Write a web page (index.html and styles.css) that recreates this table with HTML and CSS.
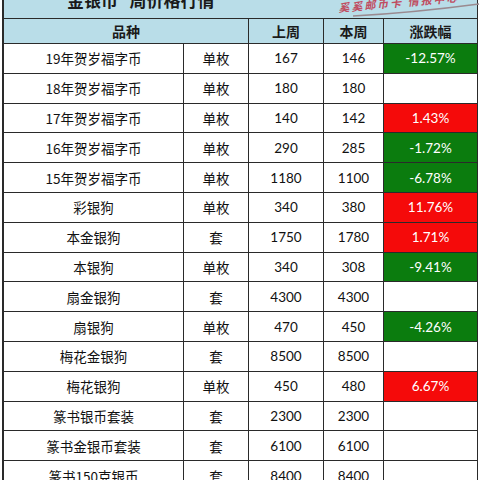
FILE: index.html
```html
<!DOCTYPE html>
<html lang="zh">
<head>
<meta charset="utf-8">
<title>金银币 周价格行情</title>
<link rel="stylesheet" href="styles.css">
</head>
<body>
<div class="sheet">
  <div class="title">金银币&nbsp;&nbsp;&nbsp;周价格行情</div>
  <div class="stamp">
    <span class="stamp-text">奚奚邮币卡 情报中心</span>
    <svg class="swoosh" width="130" height="14" viewBox="0 0 130 14"><path d="M2 13 Q60 10 128 1" fill="none" stroke="#9a8a90" stroke-width="1.6"/></svg>
  </div>
  <div class="hd span2">品种</div>
  <div class="hd">上周</div>
  <div class="hd">本周</div>
  <div class="hd">涨跌幅</div>

  <div class="c name">19年贺岁福字币</div><div class="c unit">单枚</div><div class="c num">167</div><div class="c num">146</div><div class="c num down">-12.57%</div>
  <div class="c name">18年贺岁福字币</div><div class="c unit">单枚</div><div class="c num">180</div><div class="c num">180</div><div class="c num"></div>
  <div class="c name">17年贺岁福字币</div><div class="c unit">单枚</div><div class="c num">140</div><div class="c num">142</div><div class="c num up">1.43%</div>
  <div class="c name">16年贺岁福字币</div><div class="c unit">单枚</div><div class="c num">290</div><div class="c num">285</div><div class="c num down">-1.72%</div>
  <div class="c name">15年贺岁福字币</div><div class="c unit">单枚</div><div class="c num">1180</div><div class="c num">1100</div><div class="c num down">-6.78%</div>
  <div class="c name">彩银狗</div><div class="c unit">单枚</div><div class="c num">340</div><div class="c num">380</div><div class="c num up">11.76%</div>
  <div class="c name">本金银狗</div><div class="c unit">套</div><div class="c num">1750</div><div class="c num">1780</div><div class="c num up">1.71%</div>
  <div class="c name">本银狗</div><div class="c unit">单枚</div><div class="c num">340</div><div class="c num">308</div><div class="c num down">-9.41%</div>
  <div class="c name">扇金银狗</div><div class="c unit">套</div><div class="c num">4300</div><div class="c num">4300</div><div class="c num"></div>
  <div class="c name">扇银狗</div><div class="c unit">单枚</div><div class="c num">470</div><div class="c num">450</div><div class="c num down">-4.26%</div>
  <div class="c name">梅花金银狗</div><div class="c unit">套</div><div class="c num">8500</div><div class="c num">8500</div><div class="c num"></div>
  <div class="c name">梅花银狗</div><div class="c unit">单枚</div><div class="c num">450</div><div class="c num">480</div><div class="c num up">6.67%</div>
  <div class="c name">篆书银币套装</div><div class="c unit">套</div><div class="c num">2300</div><div class="c num">2300</div><div class="c num"></div>
  <div class="c name">篆书金银币套装</div><div class="c unit">套</div><div class="c num">6100</div><div class="c num">6100</div><div class="c num"></div>
  <div class="c name">篆书150克银币</div><div class="c unit">套</div><div class="c num">8400</div><div class="c num">8400</div><div class="c num"></div>
</div>
</body>
</html>
```
FILE: styles.css
```css
html, body {
  margin: 0;
  padding: 0;
  background: #ffffff;
  overflow: hidden;
}
body {
  font-family: "Noto Sans CJK SC", "Noto Sans", sans-serif;
  color: #111;
}
.sheet {
  position: relative;
  margin: -18px 0 0 2px;
  width: 476px;
  box-sizing: border-box;
  border-left: 2px solid #2a2a2a;
  display: grid;
  grid-template-columns: 180px 65px 75px 60px 94px;
  grid-template-rows: 37px 25px;
  grid-auto-rows: 29.8px;
}
.title {
  grid-column: 1 / -1;
  box-sizing: border-box;
  background: #b9dde8;
  border-bottom: 1px solid #2a2a2a;
  border-right: 1px solid #2a2a2a;
  font-family: "Noto Sans CJK SC", sans-serif;
  font-weight: 700;
  font-size: 17px;
  line-height: 36px;
  padding-left: 63px;
  color: #1a1a1a;
}
.stamp {
  position: absolute;
  left: 333px;
  top: 14px;
  width: 140px;
  height: 22px;
}
.stamp-text {
  position: absolute;
  left: 2px;
  top: 3px;
  font-family: "Noto Sans CJK SC", sans-serif;
  font-size: 11px;
  font-style: italic;
  font-weight: 700;
  letter-spacing: 2px;
  color: #c2334a;
  transform: rotate(-5deg);
  transform-origin: left bottom;
  white-space: nowrap;
  opacity: 0.85;
}
.swoosh {
  position: absolute;
  left: 14px;
  top: 7px;
}
.hd {
  box-sizing: border-box;
  background: #b9dde8;
  border-right: 1px solid #2a2a2a;
  border-bottom: 1px solid #2a2a2a;
  display: flex;
  align-items: center;
  justify-content: center;
  font-weight: 700;
  font-size: 14px;
  color: #1a1a1a;
}
.span2 {
  grid-column: span 2;
}
.c {
  box-sizing: border-box;
  border-right: 1px solid #2a2a2a;
  border-bottom: 1px solid #2a2a2a;
  display: flex;
  align-items: center;
  justify-content: center;
  font-size: 13px;
  background: #ffffff;
}
.name, .unit {
  font-family: "Noto Sans CJK SC", sans-serif;
  font-size: 13.5px;
}
.num {
  font-family: Lato, "Noto Sans", sans-serif;
  font-size: 13.5px;
}
.down {
  background: #0b7c0e;
  color: #ffffff;
}
.up {
  background: #f50a0a;
  color: #ffffff;
}
```
